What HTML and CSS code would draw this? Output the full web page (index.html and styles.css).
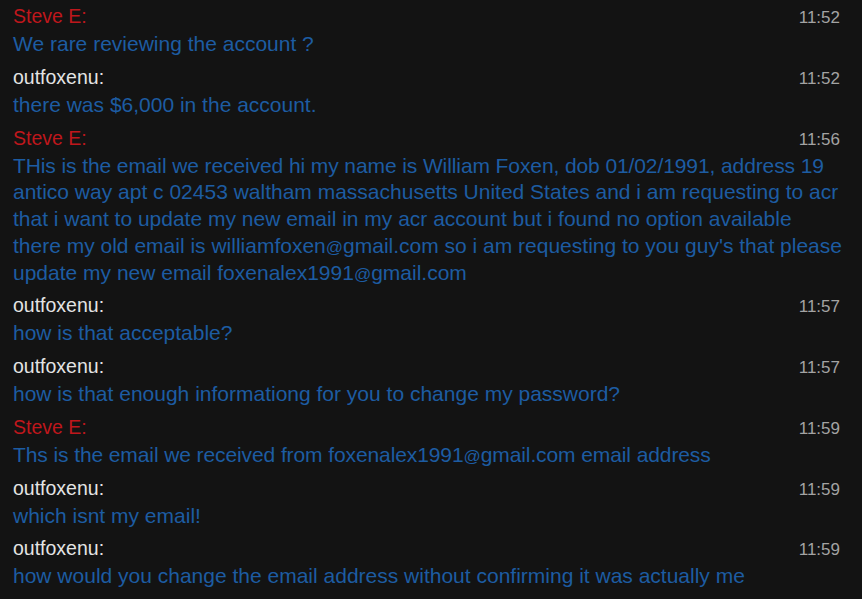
FILE: index.html
```html
<!DOCTYPE html>
<html>
<head>
<meta charset="utf-8">
<link rel="stylesheet" href="styles.css">
</head>
<body>
<div class="chat">
  <div class="msg">
    <div class="head"><span class="name agent">Steve E:</span><span class="time">11:52</span></div>
    <div class="text">We rare reviewing the account ?</div>
  </div>
  <div class="msg">
    <div class="head"><span class="name user">outfoxenu:</span><span class="time">11:52</span></div>
    <div class="text">there was $6,000 in the account.</div>
  </div>
  <div class="msg">
    <div class="head"><span class="name agent">Steve E:</span><span class="time">11:56</span></div>
    <div class="text"><span class="tight">THis is the email we received hi my name is William Foxen, dob 01/02/1991, address 19</span><br>antico way apt c 02453 waltham massachusetts United States and i am requesting to acr<br>that i want to update my new email in my acr account but i found no option available<br>there my old email is williamfoxen<span class="at">@</span>gmail.com so i am requesting to you guy's that please<br>update my new email foxenalex1991<span class="at">@</span>gmail.com</div>
  </div>
  <div class="msg">
    <div class="head"><span class="name user">outfoxenu:</span><span class="time">11:57</span></div>
    <div class="text">how is that acceptable?</div>
  </div>
  <div class="msg">
    <div class="head"><span class="name user">outfoxenu:</span><span class="time">11:57</span></div>
    <div class="text">how is that enough informationg for you to change my password?</div>
  </div>
  <div class="msg">
    <div class="head"><span class="name agent">Steve E:</span><span class="time">11:59</span></div>
    <div class="text"><span class="tight">Ths is the email we received from foxenalex1991<span class="at">@</span>gmail.com email address</span></div>
  </div>
  <div class="msg">
    <div class="head"><span class="name user">outfoxenu:</span><span class="time">11:59</span></div>
    <div class="text">which isnt my email!</div>
  </div>
  <div class="msg">
    <div class="head"><span class="name user">outfoxenu:</span><span class="time">11:59</span></div>
    <div class="text">how would you change the email address without confirming it was actually me</div>
  </div>
</div>
</body>
</html>
```
FILE: styles.css
```css
html, body {
  margin: 0;
  padding: 0;
  background: #131313;
}
body {
  width: 862px;
  height: 599px;
  overflow: hidden;
  font-family: "Liberation Sans", Arial, sans-serif;
}
.chat {
  display: flex;
  flex-direction: column;
  padding: 1px 22px 0 13px;
}
.msg {
  padding-bottom: 4px;
}
.head {
  display: flex;
  justify-content: space-between;
  align-items: baseline;
  height: 30px;
  line-height: 30px;
}
.name {
  font-size: 19.5px;
}
.agent { color: #bf171c; }
.user { color: #e4e4e4; }
.time {
  font-size: 17px;
  color: #a3a3a3;
}
.text {
  font-size: 21px;
  line-height: 26.75px;
  color: #1d5ca2;
  margin-right: -22px;
  white-space: nowrap;
}
.tight {
  letter-spacing: -0.1px;
}
.at {
  font-size: 17px;
  line-height: 0;
}
```
